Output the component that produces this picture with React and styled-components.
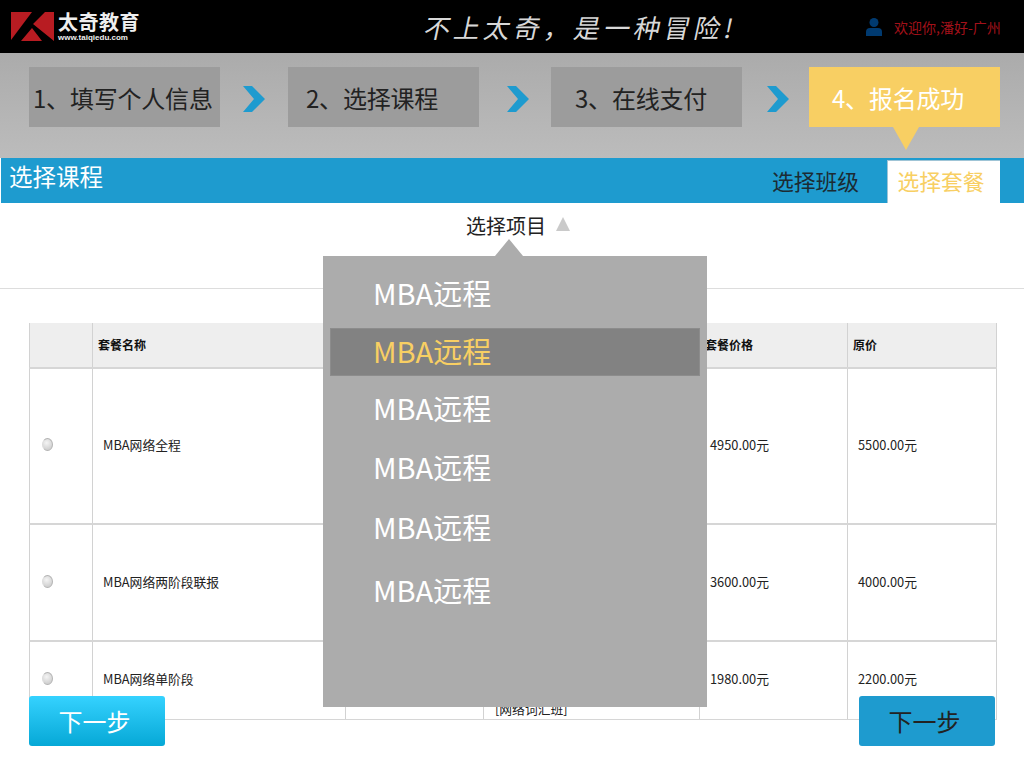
import React from "react";
import styled, { createGlobalStyle } from "styled-components";

const GlobalStyle = createGlobalStyle`
  html, body {
    margin: 0;
    padding: 0;
    background: #fff;
    font-family: "Noto Sans CJK SC", "Noto Sans", sans-serif;
  }
`;

const Page = styled.div`
  position: relative;
  width: 1024px;
  height: 768px;
  overflow: hidden;
  background: #fff;
`;

const Header = styled.header`
  display: flex;
  align-items: center;
  height: 53px;
  background: #000;
`;

const Logo = styled.div`
  display: flex;
  align-items: center;
  width: 425px;
  padding-left: 11px;
  box-sizing: border-box;
`;

const LogoText = styled.div`
  margin-left: 4px;
  color: #eee;
`;

const LogoName = styled.div`
  font-size: 20px;
  line-height: 22px;
  font-weight: 700;
  letter-spacing: 0.5px;
  white-space: nowrap;
`;

const LogoUrl = styled.div`
  font-family: "Liberation Sans", sans-serif;
  font-size: 8px;
  line-height: 9px;
  font-weight: 700;
`;

const Slogan = styled.div`
  width: 441px;
  color: #d8d8d8;
  font-size: 26px;
  letter-spacing: 4px;
  white-space: nowrap;
  transform: skewX(-12deg);
  transform-origin: left center;
`;

const UserBox = styled.div`
  display: flex;
  align-items: center;
  color: #a3111a;
  font-size: 14px;
  white-space: nowrap;
`;

const UserText = styled.span`
  margin-left: 12px;
`;

const Steps = styled.div`
  display: flex;
  align-items: flex-start;
  height: 105px;
  padding: 14px 0 0 29px;
  box-sizing: border-box;
  background: linear-gradient(#ababab, #bcbcbc);
`;

const Step = styled.div`
  position: relative;
  width: 191px;
  height: 60px;
  padding-left: ${(props) => props.$pad}px;
  box-sizing: border-box;
  font-size: 24px;
  line-height: 62px;
  letter-spacing: -0.2px;
  white-space: nowrap;
  color: ${(props) => (props.$active ? "#fff" : "#222")};
  background: ${(props) => (props.$active ? "#f8cf63" : "#9c9c9c")};

  ${(props) =>
    props.$active &&
    `&::after {
      content: "";
      position: absolute;
      left: 84px;
      top: 60px;
      border-left: 13px solid transparent;
      border-right: 13px solid transparent;
      border-top: 23px solid #f8cf63;
    }`}
`;

const StepArrow = styled.svg`
  flex: none;
  width: 22px;
  height: 26px;
  margin: 19px ${(props) => props.$right}px 0 ${(props) => props.$left}px;
`;

const TitleBar = styled.div`
  display: flex;
  justify-content: space-between;
  align-items: flex-end;
  height: 45px;
  margin-left: 1px;
  padding-right: 24px;
  background: #1e9bcf;
`;

const BarTitle = styled.h1`
  margin: 0 0 9px 8px;
  font-size: 23.5px;
  line-height: 36px;
  font-weight: 400;
  color: #fff;
`;

const Tabs = styled.div`
  display: flex;
  align-items: flex-end;
`;

const Tab = styled.div`
  width: ${(props) => (props.$active ? "113px" : "143px")};
  height: ${(props) => (props.$active ? "43px" : "42px")};
  padding-right: ${(props) => (props.$active ? "6px" : "0")};
  font-size: 21.8px;
  line-height: 40px;
  text-align: center;
  box-sizing: border-box;
  white-space: nowrap;
  color: ${(props) => (props.$active ? "#f8cf63" : "#1c2b33")};
  background: ${(props) => (props.$active ? "#fff" : "transparent")};
  border-left: ${(props) => (props.$active ? "1px solid #9fc4d6" : "none")};
  border-top: ${(props) => (props.$active ? "1px solid #9fc4d6" : "none")};
`;

const PickerRow = styled.div`
  display: flex;
  justify-content: center;
  align-items: center;
  height: 86px;
  padding: 0 0 40px 12px;
  box-sizing: border-box;
  border-bottom: 1px solid #ddd;
  color: #222;
  font-size: 20px;
`;

const PickerCaret = styled.span`
  margin: 0 0 3px 10px;
  border-left: 7.5px solid transparent;
  border-right: 7.5px solid transparent;
  border-bottom: 14px solid #cacaca;
`;

const Table = styled.table`
  width: 967px;
  margin: 34px 0 0 29px;
  border-collapse: collapse;
  table-layout: fixed;
  font-size: 12.8px;
  color: #222;
`;

const HeadCell = styled.th`
  box-sizing: border-box;
  height: 45px;
  padding: 0 0 2px 5px;
  text-align: left;
  font-size: 12px;
  font-weight: 700;
  color: #111;
  background: #eee;
  border: 1px solid #d2d2d2;
  border-top: none;
`;

const Cell = styled.td`
  box-sizing: border-box;
  height: ${(props) => props.$height}px;
  padding: 0 0 3px 10px;
  border: 1px solid #d2d2d2;
  border-width: 2px 1px 1px;
  border-color: #d6d6d6 #d2d2d2;
  vertical-align: middle;
`;

const SubCell = styled(Cell)`
  vertical-align: bottom;
  padding-left: 11px;
  line-height: 16px;
  padding-bottom: 2px;
`;

const Radio = styled.span`
  display: block;
  width: 11px;
  height: 13px;
  margin-left: 2px;
  border-radius: 50%;
  box-sizing: border-box;
  border: 1px solid #b4b4b4;
  border-left-color: #ddd;
  background: radial-gradient(circle at 40% 35%, #f4f4f4, #c4c4c4);
`;

const Dropdown = styled.div`
  position: absolute;
  left: 323px;
  top: 256px;
  width: 384px;
  height: 451px;
  padding: 14px 7px 0;
  box-sizing: border-box;
  background: #acacac;

  &::before {
    content: "";
    position: absolute;
    left: 172px;
    top: -17px;
    border-left: 14px solid transparent;
    border-right: 14px solid transparent;
    border-bottom: 17px solid #acacac;
  }
`;

const Option = styled.div`
  height: 48px;
  margin-top: ${(props) => props.$gap}px;
  box-sizing: border-box;
  font-size: 29px;
  line-height: ${(props) => (props.$active ? "42px" : "44px")};
  color: ${(props) => (props.$active ? "#f8cf63" : "#fff")};
  background: ${(props) => (props.$active ? "#828282" : "transparent")};
  border: ${(props) => (props.$active ? "1px solid #8c8c8c" : "none")};
  padding-left: ${(props) => (props.$active ? "42px" : "43px")};
`;

const NextButton = styled.button`
  position: absolute;
  top: 696px;
  left: ${(props) => props.$left}px;
  width: 136px;
  height: 50px;
  padding: 0 5px 2px 0;
  border: none;
  border-radius: 3px;
  font-family: inherit;
  font-size: 24px;
  color: ${(props) => (props.$primary ? "#fff" : "#222")};
  background: ${(props) =>
    props.$primary
      ? "linear-gradient(#35d2ff, #06a8d6)"
      : "#1e9bcf"};
`;

const rows = [
  { height: 156, name: "MBA网络全程", price: "4950.00元", origin: "5500.00元" },
  { height: 117, name: "MBA网络两阶段联报", price: "3600.00元", origin: "4000.00元" },
  { height: 78, name: "MBA网络单阶段", price: "1980.00元", origin: "2200.00元", sub: "[网络词汇班]" },
];

const optionGaps = [0, 10, 9, 11, 12, 15];

function Arrow({ left, right }) {
  return (
    <StepArrow $left={left} $right={right} viewBox="0 0 22 26">
      <path d="M0 0h9l13 13L9 26H0l11-13z" fill="#1e9bcf" />
    </StepArrow>
  );
}

export default function App() {
  return (
    <Page>
      <GlobalStyle />
      <Header>
        <Logo>
          <svg width="43" height="29" viewBox="0 0 43 29">
            <path d="M0 0h21L0 28zM43 0h-9L22 12l21 17zM21 16l10 13H10z" fill="#b81c22" />
          </svg>
          <LogoText>
            <LogoName>太奇教育</LogoName>
            <LogoUrl>www.taiqiedu.com</LogoUrl>
          </LogoText>
        </Logo>
        <Slogan>不上太奇，是一种冒险!</Slogan>
        <UserBox>
          <svg width="16" height="18" viewBox="0 0 16 18">
            <circle cx="8" cy="4.5" r="4.5" fill="#003a70" />
            <path d="M0 18v-4q0-4 4-4h8q4 0 4 4v4z" fill="#003a70" />
          </svg>
          <UserText>欢迎你,潘好-广州</UserText>
        </UserBox>
      </Header>

      <Steps>
        <Step $pad={4}>1、填写个人信息</Step>
        <Arrow left={23} right={23} />
        <Step $pad={18}>2、选择课程</Step>
        <Arrow left={28} right={22} />
        <Step $pad={24}>3、在线支付</Step>
        <Arrow left={25} right={20} />
        <Step $pad={23} $active>4、报名成功</Step>
      </Steps>

      <TitleBar>
        <BarTitle>选择课程</BarTitle>
        <Tabs>
          <Tab>选择班级</Tab>
          <Tab $active>选择套餐</Tab>
        </Tabs>
      </TitleBar>

      <PickerRow>
        选择项目
        <PickerCaret />
      </PickerRow>

      <Table>
        <colgroup>
          <col style={{ width: 63 }} />
          <col style={{ width: 253 }} />
          <col style={{ width: 138 }} />
          <col style={{ width: 216 }} />
          <col style={{ width: 148 }} />
          <col style={{ width: 149 }} />
        </colgroup>
        <thead>
          <tr>
            <HeadCell />
            <HeadCell>套餐名称</HeadCell>
            <HeadCell />
            <HeadCell />
            <HeadCell>套餐价格</HeadCell>
            <HeadCell>原价</HeadCell>
          </tr>
        </thead>
        <tbody>
          {rows.map((row) => (
            <tr key={row.name}>
              <Cell $height={row.height}>
                <Radio />
              </Cell>
              <Cell $height={row.height}>{row.name}</Cell>
              <Cell $height={row.height} />
              <SubCell $height={row.height}>{row.sub}</SubCell>
              <Cell $height={row.height}>{row.price}</Cell>
              <Cell $height={row.height}>{row.origin}</Cell>
            </tr>
          ))}
        </tbody>
      </Table>

      <Dropdown>
        {optionGaps.map((gap, i) => (
          <Option key={i} $gap={gap} $active={i === 1}>
            MBA远程
          </Option>
        ))}
      </Dropdown>

      <NextButton $left={29} $primary>下一步</NextButton>
      <NextButton $left={859}>下一步</NextButton>
    </Page>
  );
}
